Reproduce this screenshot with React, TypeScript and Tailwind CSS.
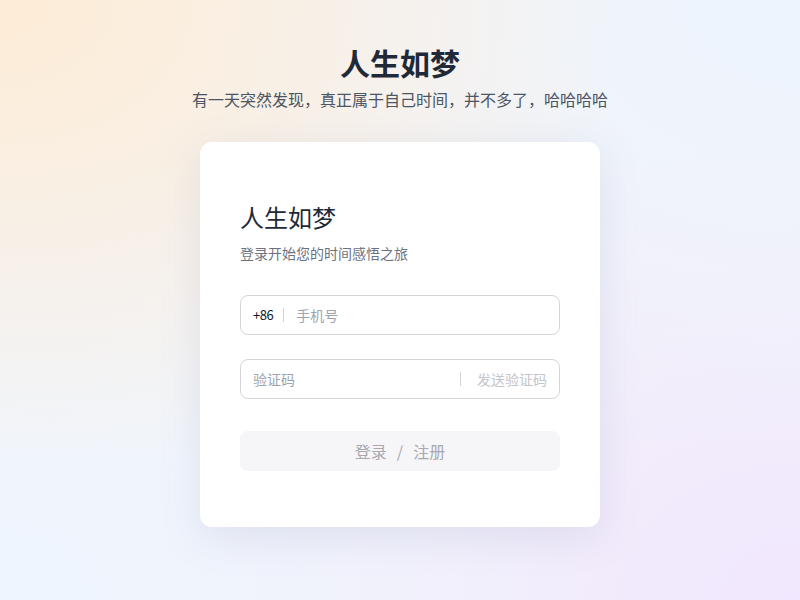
import React from "react";

export default function App() {
  const font = { fontFamily: '"Noto Sans CJK SC", "Noto Sans", sans-serif' };
  return (
    <div
      style={font}
      className="w-full min-h-[600px] flex flex-col items-center bg-[#f4f4f6] bg-[radial-gradient(ellipse_at_0%_0%,#fdecd6_0%,rgba(253,238,219,0)_55%),radial-gradient(ellipse_at_100%_0%,#edf4fe_0%,rgba(237,244,254,0)_55%),radial-gradient(ellipse_at_0%_100%,#eef5ff_0%,rgba(238,245,255,0)_55%),radial-gradient(ellipse_at_100%_100%,#f1e7fe_0%,rgba(241,231,254,0)_60%)]"
    >
      <h1 className="mt-[44px] text-[30px] leading-[36px] font-bold text-[#1f2937]">人生如梦</h1>
      <p className="mt-[7px] text-[16px] leading-[24px] text-[#4b5563]">
        有一天突然发现，真正属于自己时间，并不多了，哈哈哈哈
      </p>
      <div className="mt-[31px] w-[400px] bg-white rounded-xl shadow-[0_10px_40px_rgba(110,120,170,0.15)] px-10 pt-[56px] pb-[56px] flex flex-col">
        <h2 className="text-[24px] leading-[38px] text-[#1f2937]">人生如梦</h2>
        <p className="mt-[6px] text-[14px] leading-[22px] text-[#6b7280]">登录开始您的时间感悟之旅</p>
        <div className="mt-[31px] h-[40px] rounded-lg border border-[#d4d4d8] flex items-center px-3">
          <span className="text-[13px] tracking-[-0.5px] text-[#111827]">+86</span>
          <span className="ml-[10px] w-px h-[14px] bg-[#d4d4d8]"></span>
          <span className="ml-3 text-[14px] text-[#9ca3af]">手机号</span>
        </div>
        <div className="mt-[24px] h-[40px] rounded-lg border border-[#d4d4d8] flex items-center px-3">
          <span className="text-[14px] text-[#9ca3af] flex-1">验证码</span>
          <span className="w-px h-[14px] bg-[#d4d4d8]"></span>
          <span className="ml-4 text-[14px] text-[#c4c4c9]">发送验证码</span>
        </div>
        <button className="mt-[32px] h-[40px] rounded-lg bg-[#f6f6f8] text-[16px] text-[#a8a8ae] flex items-center justify-center">
          登录<span className="mx-[10px]">/</span>注册
        </button>
      </div>
    </div>
  );
}
